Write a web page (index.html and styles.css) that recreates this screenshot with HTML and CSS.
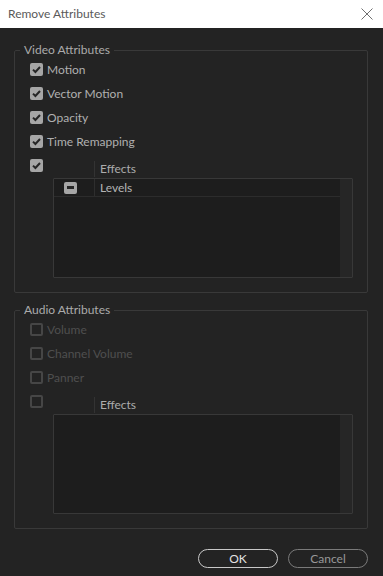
FILE: index.html
```html
<!DOCTYPE html>
<html lang="en">

<head>
    <meta charset="UTF-8">
    <meta name="viewport" content="width=device-width, initial-scale=1.0">
    <title>Remove Attributes</title>
    <link rel="stylesheet" href="styles.css">
</head>

<body>
    <div class="dialog">
        <div class="titlebar">
            <span class="title">Remove Attributes</span>
            <svg class="close" width="12" height="12" viewBox="0 0 12 12">
                <path d="M0.5 0.5 L11.5 11.5 M11.5 0.5 L0.5 11.5" stroke="#6f6f6f" stroke-width="1" fill="none" />
            </svg>
        </div>

        <div class="content">
            <fieldset class="group">
                <legend>Video Attributes</legend>

                <label class="row">
                    <span class="check on"><svg viewBox="0 0 13 13"><path d="M3 6.6 L5.4 9 L10 4" /></svg></span>
                    Motion
                </label>
                <label class="row">
                    <span class="check on"><svg viewBox="0 0 13 13"><path d="M3 6.6 L5.4 9 L10 4" /></svg></span>
                    Vector Motion
                </label>
                <label class="row">
                    <span class="check on"><svg viewBox="0 0 13 13"><path d="M3 6.6 L5.4 9 L10 4" /></svg></span>
                    Opacity
                </label>
                <label class="row">
                    <span class="check on"><svg viewBox="0 0 13 13"><path d="M3 6.6 L5.4 9 L10 4" /></svg></span>
                    Time Remapping
                </label>
                <div class="row effects-row">
                    <span class="check on"><svg viewBox="0 0 13 13"><path d="M3 6.6 L5.4 9 L10 4" /></svg></span>
                    <span class="col-head">Effects</span>
                </div>

                <div class="list">
                    <div class="list-body">
                        <div class="item">
                            <span class="item-toggle"><span class="minus"></span></span>
                            <span class="item-name">Levels</span>
                        </div>
                    </div>
                    <div class="scroll"></div>
                </div>
            </fieldset>

            <fieldset class="group audio">
                <legend>Audio Attributes</legend>

                <label class="row off">
                    <span class="check"></span>
                    Volume
                </label>
                <label class="row off">
                    <span class="check"></span>
                    Channel Volume
                </label>
                <label class="row off">
                    <span class="check"></span>
                    Panner
                </label>
                <div class="row effects-row">
                    <span class="check"></span>
                    <span class="col-head">Effects</span>
                </div>

                <div class="list">
                    <div class="list-body"></div>
                    <div class="scroll"></div>
                </div>
            </fieldset>
        </div>

        <div class="buttons">
            <button class="btn primary">OK</button>
            <button class="btn">Cancel</button>
        </div>
    </div>
</body>

</html>
```

FILE: styles.css
```css
* {
    margin: 0;
    padding: 0;
    box-sizing: border-box;
}

body {
    background-color: #232323;
    font-family: Lato, "Noto Sans", sans-serif;
    font-size: 12px;
    color: #b0b0b0;
}

.dialog {
    width: 383px;
    height: 576px;
    display: flex;
    flex-direction: column;
}

.titlebar {
    height: 28px;
    background-color: #fff;
    display: flex;
    align-items: center;
    justify-content: space-between;
    padding: 0 10px 1px 8px;
}

.title {
    color: #5a5a5a;
    font-size: 12px;
}

.content {
    padding: 15px 15px 0 14px;
}

.group {
    border: 1px solid #393939;
    border-radius: 2px;
    padding: 0 14px 14px 15px;
    min-width: 0;
}

.group.audio {
    margin-top: 10px;
}

.group legend {
    line-height: 14px;
    padding: 0 4px;
    margin-left: -10px;
    color: #ababab;
}

.row {
    height: 24px;
    display: flex;
    align-items: center;
    gap: 4px;
    color: #b0b0b0;
}

.row.off {
    color: #4f4f4f;
}

.check {
    width: 13px;
    height: 13px;
    border-radius: 2px;
    border: 2px solid #464646;
    flex-shrink: 0;
    display: flex;
}

.check.on {
    border: none;
    background-color: #a6a6a6;
}

.check svg {
    width: 13px;
    height: 13px;
}

.check path {
    fill: none;
    stroke: #262626;
    stroke-width: 2;
}

.effects-row {
    gap: 0;
}

.col-head {
    align-self: flex-end;
    margin-left: 51px;
    height: 16px;
    line-height: 16px;
    padding-left: 5px;
    border-left: 1px solid #333;
    color: #acacac;
}

.list {
    width: 300px;
    height: 100px;
    margin: 1px 0 0 23px;
    border: 1px solid #383838;
    border-radius: 1px;
    background-color: #1d1d1d;
    display: flex;
}

.list-body {
    flex: 1;
}

.scroll {
    width: 12px;
    background-color: #262626;
}

.item {
    height: 18px;
    display: flex;
    border-bottom: 1px solid #2c2c2c;
}

.item-toggle {
    width: 40px;
    padding-left: 10px;
    display: flex;
    align-items: center;
}

.minus {
    width: 13px;
    height: 12px;
    border-radius: 2px;
    background-color: #a6a6a6;
    display: flex;
    align-items: center;
    justify-content: center;
}

.minus::after {
    content: "";
    width: 7px;
    height: 3px;
    background-color: #262626;
}

.item-name {
    border-left: 1px solid #2e2e2e;
    padding-left: 5px;
    line-height: 17px;
    color: #b4b4b4;
}

.buttons {
    display: flex;
    justify-content: flex-end;
    gap: 10px;
    padding: 20px 15px 0 0;
}

.btn {
    width: 80px;
    height: 19px;
    border-radius: 10px;
    border: 1px solid #7a7a7a;
    background: transparent;
    font-family: Lato, "Noto Sans", sans-serif;
    font-size: 12px;
    line-height: 15px;
    color: #989898;
}

.btn.primary {
    border-color: #c8c8c8;
    color: #e2e2e2;
}
```
